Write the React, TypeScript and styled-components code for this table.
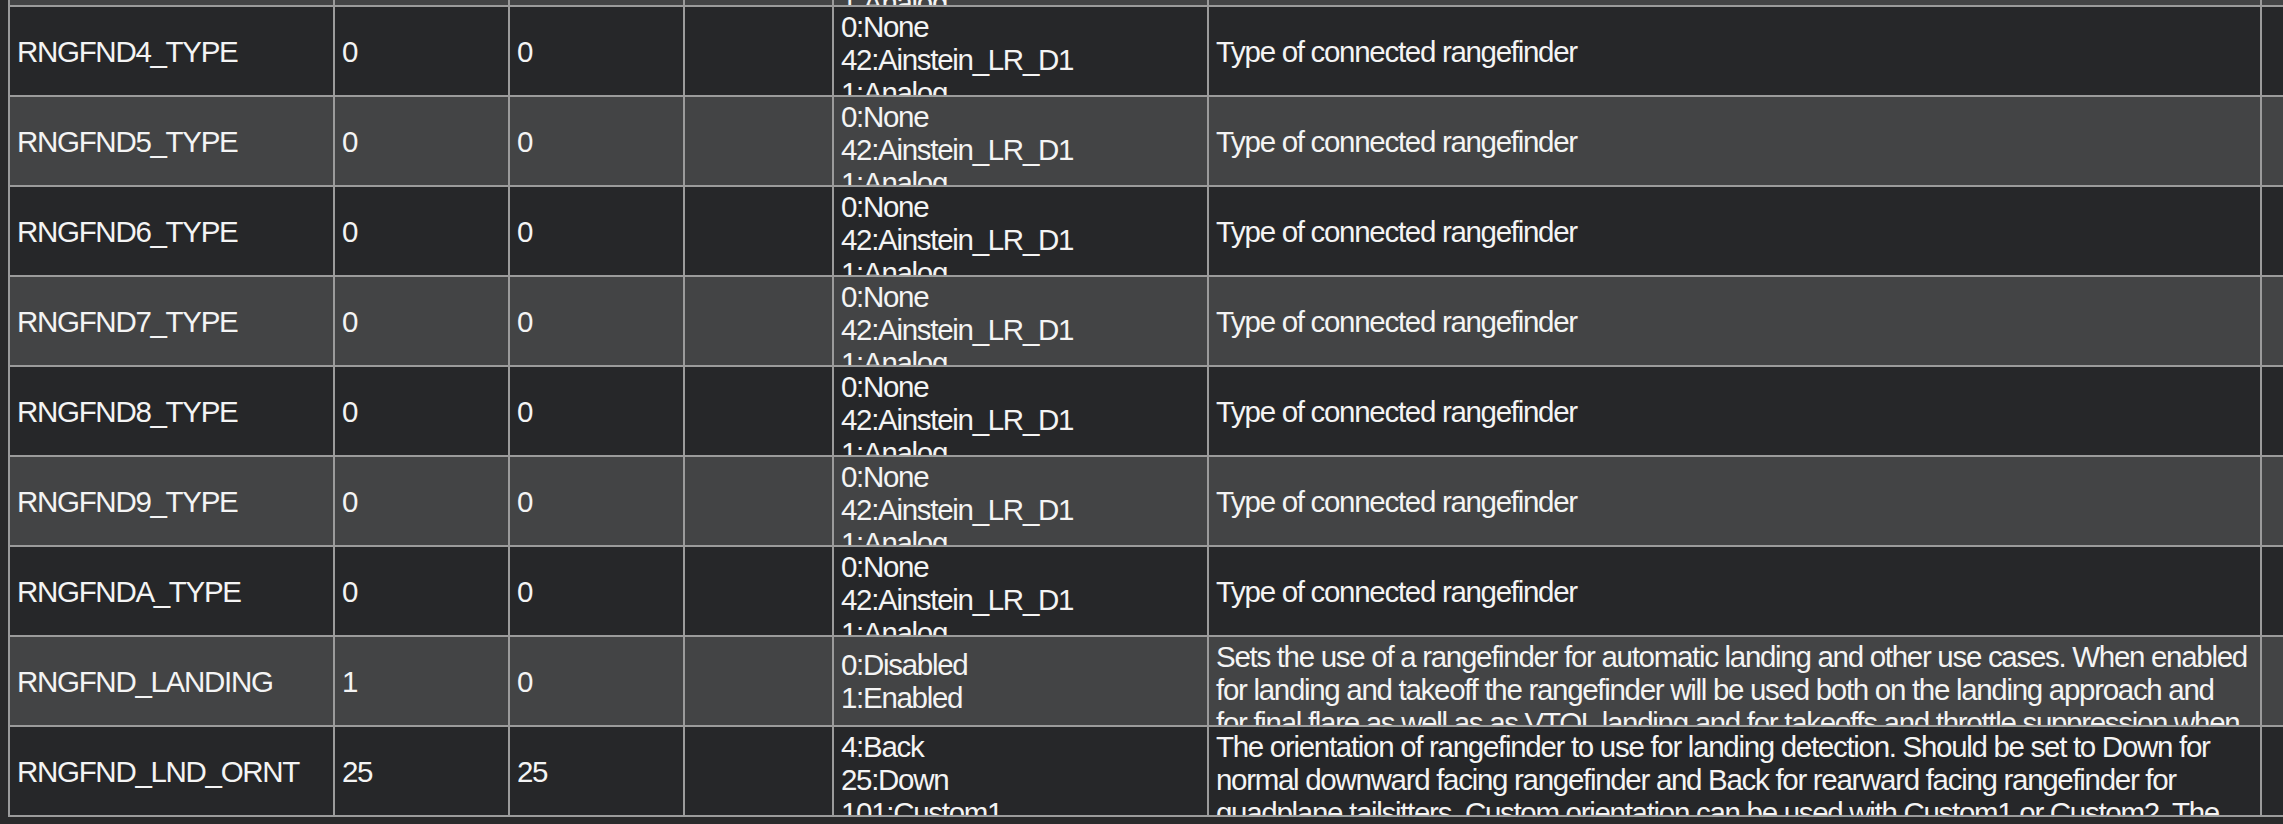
import styled, { createGlobalStyle } from "styled-components";

const GlobalStyle = createGlobalStyle`
  html, body {
    margin: 0;
    padding: 0;
    background: #2a2a2b;
    overflow: hidden;
  }
`;

const COLUMNS = "325px 175px 175px 149px 375px 1053px 220px";
const LINE = 33;

const Viewport = styled.div`
  height: 817px;
  width: 100vw;
  overflow: hidden;
  padding-left: 8px;
  box-sizing: border-box;
`;

// scrolled a bit: first row is only partly visible
const Table = styled.div`
  margin-top: -83px;
  width: max-content;
  border-left: 2px solid #9b9b9b;
  font-family: "Liberation Sans", Arial, sans-serif;
  font-size: 29.5px;
  letter-spacing: -1.3px;
  color: #f4f4f4;
`;

const Row = styled.div<{ $light: boolean }>`
  display: grid;
  grid-template-columns: ${COLUMNS};
  height: 90px;
  background: ${(p) => (p.$light ? "#434445" : "#262729")};
`;

const Cell = styled.div<{ $top?: boolean }>`
  box-sizing: border-box;
  display: flex;
  align-items: ${(p) => (p.$top ? "flex-start" : "center")};
  padding: 3px 6px 3px 7px;
  border-right: 2px solid #9b9b9b;
  border-bottom: 2px solid #9b9b9b;
  overflow: hidden;
  white-space: nowrap;
  line-height: ${LINE}px;
`;

const Lines = styled.div`
  display: flex;
  flex-direction: column;
`;

type Param = {
  name: string;
  value: string;
  def: string;
  units: string;
  options: string[];
  desc: string[];
};

const typeOptions = [
  "0:None",
  "42:Ainstein_LR_D1",
  "1:Analog",
  "2:MaxbotixI2C",
  "3:LidarLite-I2C",
];

const typeRow = (n: string): Param => ({
  name: `RNGFND${n}_TYPE`,
  value: "0",
  def: "0",
  units: "",
  options: typeOptions,
  desc: ["Type of connected rangefinder"],
});

const params: Param[] = [
  typeRow("3"),
  typeRow("4"),
  typeRow("5"),
  typeRow("6"),
  typeRow("7"),
  typeRow("8"),
  typeRow("9"),
  typeRow("A"),
  {
    name: "RNGFND_LANDING",
    value: "1",
    def: "0",
    units: "",
    options: ["0:Disabled", "1:Enabled"],
    desc: [
      "Sets the use of a rangefinder for automatic landing and other use cases. When enabled",
      "for landing and takeoff the rangefinder will be used both on the landing approach and",
      "for final flare as well as as VTOL landing and for takeoffs and throttle suppression when",
      "the rangefinder is used.",
    ],
  },
  {
    name: "RNGFND_LND_ORNT",
    value: "25",
    def: "25",
    units: "",
    options: ["4:Back", "25:Down", "101:Custom1", "102:Custom2"],
    desc: [
      "The orientation of rangefinder to use for landing detection. Should be set to Down for",
      "normal downward facing rangefinder and Back for rearward facing rangefinder for",
      "quadplane tailsitters. Custom orientation can be used with Custom1 or Custom2. The",
      "orientation must match the RNGFND_ORIENT parameter.",
    ],
  },
];

const MultiLine = ({ lines }: { lines: string[] }) => {
  const overflows = lines.length * LINE > 82;
  return (
    <Cell $top={overflows}>
      <Lines>
        {lines.map((l, i) => (
          <span key={i}>{l}</span>
        ))}
      </Lines>
    </Cell>
  );
};

export default function App() {
  return (
    <>
      <GlobalStyle />
      <Viewport>
        <Table>
          {params.map((p, i) => (
            <Row key={p.name} $light={i % 2 === 0}>
              <Cell>{p.name}</Cell>
              <Cell>{p.value}</Cell>
              <Cell>{p.def}</Cell>
              <Cell>{p.units}</Cell>
              <MultiLine lines={p.options} />
              <MultiLine lines={p.desc} />
              <Cell />
            </Row>
          ))}
        </Table>
      </Viewport>
    </>
  );
}
